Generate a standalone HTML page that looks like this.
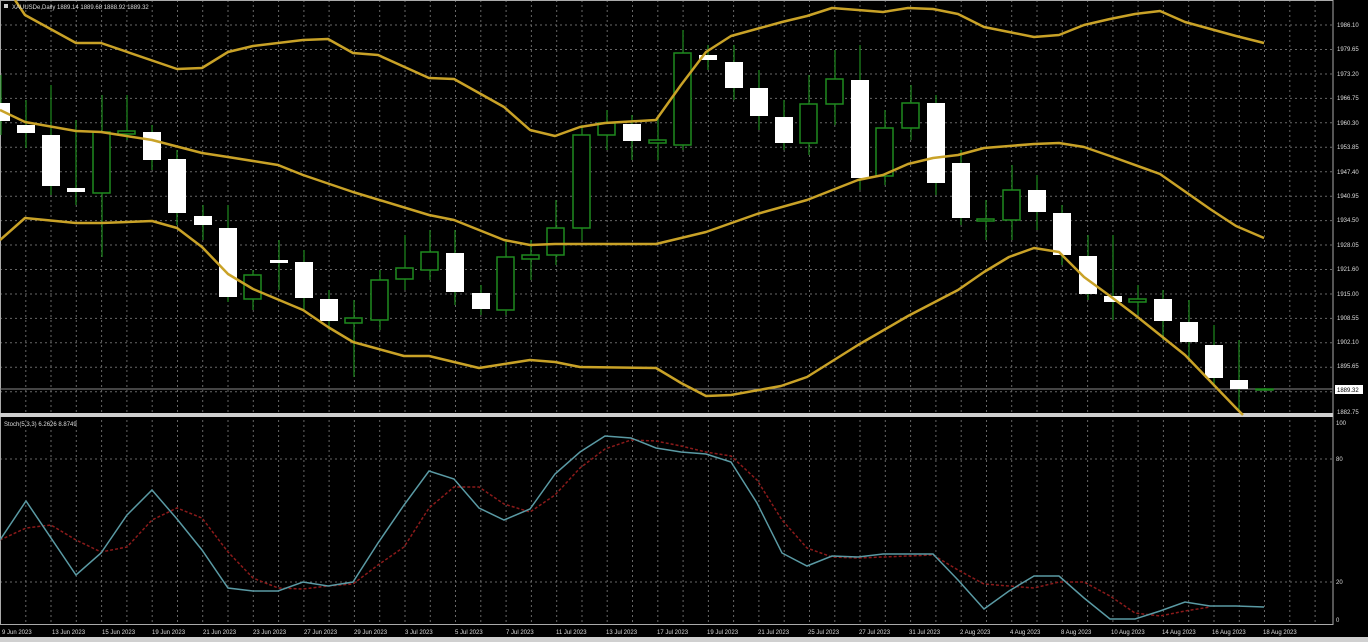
<!DOCTYPE html>
<html><head><meta charset="utf-8"><style>
html,body{margin:0;padding:0;background:#000;width:1368px;height:642px;overflow:hidden}
svg{display:block}
text{font-family:"Liberation Sans",sans-serif;fill:#ddd}
</style></head><body>
<svg width="1368" height="642" viewBox="0 0 1368 642" xmlns="http://www.w3.org/2000/svg">
<rect width="1368" height="642" fill="#000"/>
<!-- grid -->
<g stroke="#8a8a8a" stroke-width="1" stroke-dasharray="2,3" opacity="0.75">
<path d="M0 25H1333M0 49.5H1333M0 74H1333M0 98.4H1333M0 122.8H1333M0 147.3H1333M0 171.7H1333M0 196.2H1333M0 220.6H1333M0 245H1333M0 269.5H1333M0 294H1333M0 318.4H1333M0 342.8H1333M0 367.3H1333M0 391.7H1333M0 459H1333M0 582H1333"/>
<path d="M25.8 0V625M51 0V625M76.3 0V625M101.6 0V625M126.9 0V625M152.2 0V625M177.5 0V625M202.7 0V625M228 0V625M253.3 0V625M278.6 0V625M303.9 0V625M329.1 0V625M354.4 0V625M379.7 0V625M405 0V625M430.3 0V625M455.5 0V625M480.8 0V625M506.1 0V625M531.4 0V625M556.7 0V625M582 0V625M607.2 0V625M632.5 0V625M657.8 0V625M683.1 0V625M708.4 0V625M733.6 0V625M758.9 0V625M784.2 0V625M809.5 0V625M834.8 0V625M860 0V625M885.3 0V625M910.6 0V625M935.9 0V625M961.2 0V625M986.5 0V625M1011.7 0V625M1037 0V625M1062.3 0V625M1087.6 0V625M1112.9 0V625M1138.1 0V625M1163.4 0V625M1188.7 0V625M1214 0V625M1239.3 0V625M1264.5 0V625M1289.8 0V625M1315.1 0V625"/>
</g>
<!-- borders -->
<rect x="0.5" y="0.5" width="1332.5" height="624" fill="none" stroke="#aaa" stroke-width="1"/>
<rect x="0" y="413" width="1333" height="4" fill="#cfcfcf"/>
<line x1="0" y1="389" x2="1333" y2="389" stroke="#888" stroke-width="1"/>
<rect x="0" y="637" width="1368" height="5" fill="#d0d0d0"/>

<!-- wicks -->
<g stroke="#1f8a1f" stroke-width="1.2">
<path d="M1 75V135M26 100V148M51 85V195M76 120V205M102 95V257M127 95V140M152 125V170M177 150V225M203 205V240M228 205V302M253 270V310M279 240V290M304 250V310M329 290V330M354 300V377M380 270V330M405 235V290M430 230V280M455 230V305M481 285V315M506 240V315M531 240V280M556 200V265M582 125V240M607 110V150M632 115V160M658 118V160M683 30V150M708 45V70M734 45V100M759 70V130M784 100V150M809 75V155M835 50V125M860 45V190M885 110V185M911 85V140M936 95V195M961 150V225M986 200V240M1012 165V240M1037 175V230M1062 205V265M1088 235V300M1113 235V320M1138 285V315M1163 290V340M1189 300V360M1214 325V385M1239 340V410M1265 388V391"/>
</g>
<!-- bearish bodies (white) -->
<g fill="#fff">
<rect x="0" y="103" width="10" height="18"/>
<rect x="17" y="125" width="18" height="8"/>
<rect x="42" y="135" width="18" height="51"/>
<rect x="67" y="188" width="18" height="4"/>
<rect x="143" y="132" width="18" height="28"/>
<rect x="168" y="159" width="18" height="54"/>
<rect x="194" y="216" width="18" height="9"/>
<rect x="219" y="228" width="18" height="69"/>
<rect x="270" y="260" width="18" height="3"/>
<rect x="295" y="262" width="18" height="36"/>
<rect x="320" y="299" width="18" height="22"/>
<rect x="446" y="253" width="18" height="39"/>
<rect x="472" y="293" width="18" height="16"/>
<rect x="623" y="124" width="18" height="17"/>
<rect x="699" y="55" width="18" height="5"/>
<rect x="725" y="62" width="18" height="26"/>
<rect x="750" y="88" width="18" height="28"/>
<rect x="775" y="117" width="18" height="26"/>
<rect x="851" y="80" width="18" height="98"/>
<rect x="927" y="103" width="18" height="80"/>
<rect x="952" y="163" width="18" height="55"/>
<rect x="1028" y="190" width="18" height="22"/>
<rect x="1053" y="213" width="18" height="42"/>
<rect x="1079" y="256" width="18" height="38"/>
<rect x="1104" y="296" width="18" height="6"/>
<rect x="1154" y="299" width="18" height="22"/>
<rect x="1180" y="322" width="18" height="20"/>
<rect x="1205" y="345" width="18" height="33"/>
<rect x="1230" y="380" width="18" height="9"/>
</g>
<!-- bullish bodies -->
<g fill="#000" stroke="#1f8a1f" stroke-width="1.5">
<rect x="93" y="132" width="17" height="61"/>
<rect x="118" y="131" width="17" height="3"/>
<rect x="244" y="275" width="17" height="24"/>
<rect x="345" y="318" width="17" height="5"/>
<rect x="371" y="280" width="17" height="40"/>
<rect x="396" y="268" width="17" height="11"/>
<rect x="421" y="252" width="17" height="18"/>
<rect x="497" y="257" width="17" height="53"/>
<rect x="522" y="255" width="17" height="4"/>
<rect x="547" y="228" width="17" height="27"/>
<rect x="573" y="135" width="17" height="93"/>
<rect x="598" y="123" width="17" height="12"/>
<rect x="649" y="140" width="17" height="3"/>
<rect x="674" y="53" width="17" height="92"/>
<rect x="800" y="104" width="17" height="39"/>
<rect x="826" y="79" width="17" height="25"/>
<rect x="876" y="128" width="17" height="48"/>
<rect x="902" y="103" width="17" height="25"/>
<rect x="977" y="219" width="17" height="2"/>
<rect x="1003" y="190" width="17" height="30"/>
<rect x="1129" y="299" width="17" height="3"/>
<rect x="1256" y="389" width="17" height="1"/>
</g>
<!-- bollinger -->
<g fill="none" stroke="#c9a227" stroke-width="2.5" stroke-linejoin="round">
<polyline points="15,0 25,15 76,43 101,43 177,69 202,68 228,52 253,46 303,40 328,39 353,53 378,55 429,78 454,79 504,107 530,130 555,136 580,127 605,123 656,120 681,85 706,52 731,36 782,22 807,16 832,8 858,10 883,12 908,8 933,9 958,14 984,27 1009,32 1034,37 1059,35 1084,25 1110,19 1135,14 1160,11 1185,22 1236,36 1264,43"/>
<polyline points="0,110 25,122 76,131 101,132 152,140 202,153 228,157 278,165 303,175 353,192 429,215 454,220 504,240 530,245 555,244 656,244 706,232 757,214 807,200 858,180 883,175 908,164 933,158 958,155 984,148 1034,144 1059,143 1084,147 1110,156 1160,174 1210,209 1236,226 1264,238"/>
<polyline points="0,240 25,218 76,223 101,223 152,221 177,228 202,247 228,274 253,289 303,310 328,327 353,342 404,356 429,356 479,368 530,360 555,362 580,367 656,368 681,383 706,396 731,395 781,386 807,377 858,345 908,316 958,290 984,272 1009,257 1034,248 1059,252 1084,277 1110,296 1135,315 1185,355 1236,408 1243,415"/>
</g>
<!-- stochastic -->
<polyline fill="none" stroke="#8b1a1a" stroke-width="1.5" stroke-dasharray="3,2" points="0,540 26,528 51,525 76,540 101,552 127,547 152,520 177,508 202,518 228,552 253,578 278,588 303,589 328,586 353,584 378,565 404,547 429,508 454,487 479,487 504,504 530,512 555,495 580,468 605,449 631,440 656,441 681,446 706,452 731,456 757,480 782,520 807,548 832,557 858,558 883,557 933,555 958,570 984,584 1034,588 1059,582 1084,582 1110,596 1135,613 1160,616 1185,611 1210,607"/>
<polyline fill="none" stroke="#5a9aa4" stroke-width="1.5" points="0,540 26,501 76,575 101,553 127,515 152,490 177,519 202,550 228,588 253,591 278,591 303,582 328,586 353,582 378,543 404,505 429,471 454,479 479,508 504,520 530,509 555,474 580,452 605,436 631,438 656,448 681,452 706,454 731,462 757,503 782,553 807,566 832,556 858,557 883,554 933,554 958,580 984,609 1009,591 1034,576 1059,576 1084,598 1110,619 1135,619 1160,611 1185,602 1210,606 1236,606 1264,607"/>

<!-- titles -->
<rect x="4" y="4" width="4" height="4" fill="#ccc"/>
<text x="12" y="9" font-size="6">XAUUSDe,Daily  1889.14 1889.68 1888.92 1889.32</text>
<text x="4" y="426" font-size="6">Stoch(5,3,3) 6.2626 8.8749</text>

<!-- price axis -->
<g font-size="6">
<text x="1337" y="27">1986.10</text>
<text x="1337" y="51">1979.65</text>
<text x="1337" y="76">1973.20</text>
<text x="1337" y="100">1966.75</text>
<text x="1337" y="125">1960.30</text>
<text x="1337" y="149">1953.85</text>
<text x="1337" y="174">1947.40</text>
<text x="1337" y="198">1940.95</text>
<text x="1337" y="222">1934.50</text>
<text x="1337" y="247">1928.05</text>
<text x="1337" y="271">1921.60</text>
<text x="1337" y="296">1915.00</text>
<text x="1337" y="320">1908.55</text>
<text x="1337" y="344">1902.10</text>
<text x="1337" y="368">1895.65</text>
<text x="1337" y="414">1882.75</text>
<text x="1336" y="425">100</text>
<text x="1336" y="461">80</text>
<text x="1336" y="584">20</text>
<text x="1336" y="622">0</text>
</g>
<rect x="1335" y="385" width="28" height="9" fill="#fff"/>
<text x="1337" y="392" font-size="6" style="fill:#000">1889.32</text>

<!-- date axis -->
<g font-size="6">
<text x="2" y="634">9 Jun 2023</text>
<text x="52" y="634">13 Jun 2023</text>
<text x="102" y="634">15 Jun 2023</text>
<text x="152" y="634">19 Jun 2023</text>
<text x="203" y="634">21 Jun 2023</text>
<text x="253" y="634">23 Jun 2023</text>
<text x="304" y="634">27 Jun 2023</text>
<text x="354" y="634">29 Jun 2023</text>
<text x="405" y="634">3 Jul 2023</text>
<text x="455" y="634">5 Jul 2023</text>
<text x="506" y="634">7 Jul 2023</text>
<text x="556" y="634">11 Jul 2023</text>
<text x="606" y="634">13 Jul 2023</text>
<text x="657" y="634">17 Jul 2023</text>
<text x="707" y="634">19 Jul 2023</text>
<text x="758" y="634">21 Jul 2023</text>
<text x="808" y="634">25 Jul 2023</text>
<text x="859" y="634">27 Jul 2023</text>
<text x="909" y="634">31 Jul 2023</text>
<text x="960" y="634">2 Aug 2023</text>
<text x="1010" y="634">4 Aug 2023</text>
<text x="1061" y="634">8 Aug 2023</text>
<text x="1111" y="634">10 Aug 2023</text>
<text x="1162" y="634">14 Aug 2023</text>
<text x="1212" y="634">16 Aug 2023</text>
<text x="1263" y="634">18 Aug 2023</text>
</g>
</svg>
</body></html>
